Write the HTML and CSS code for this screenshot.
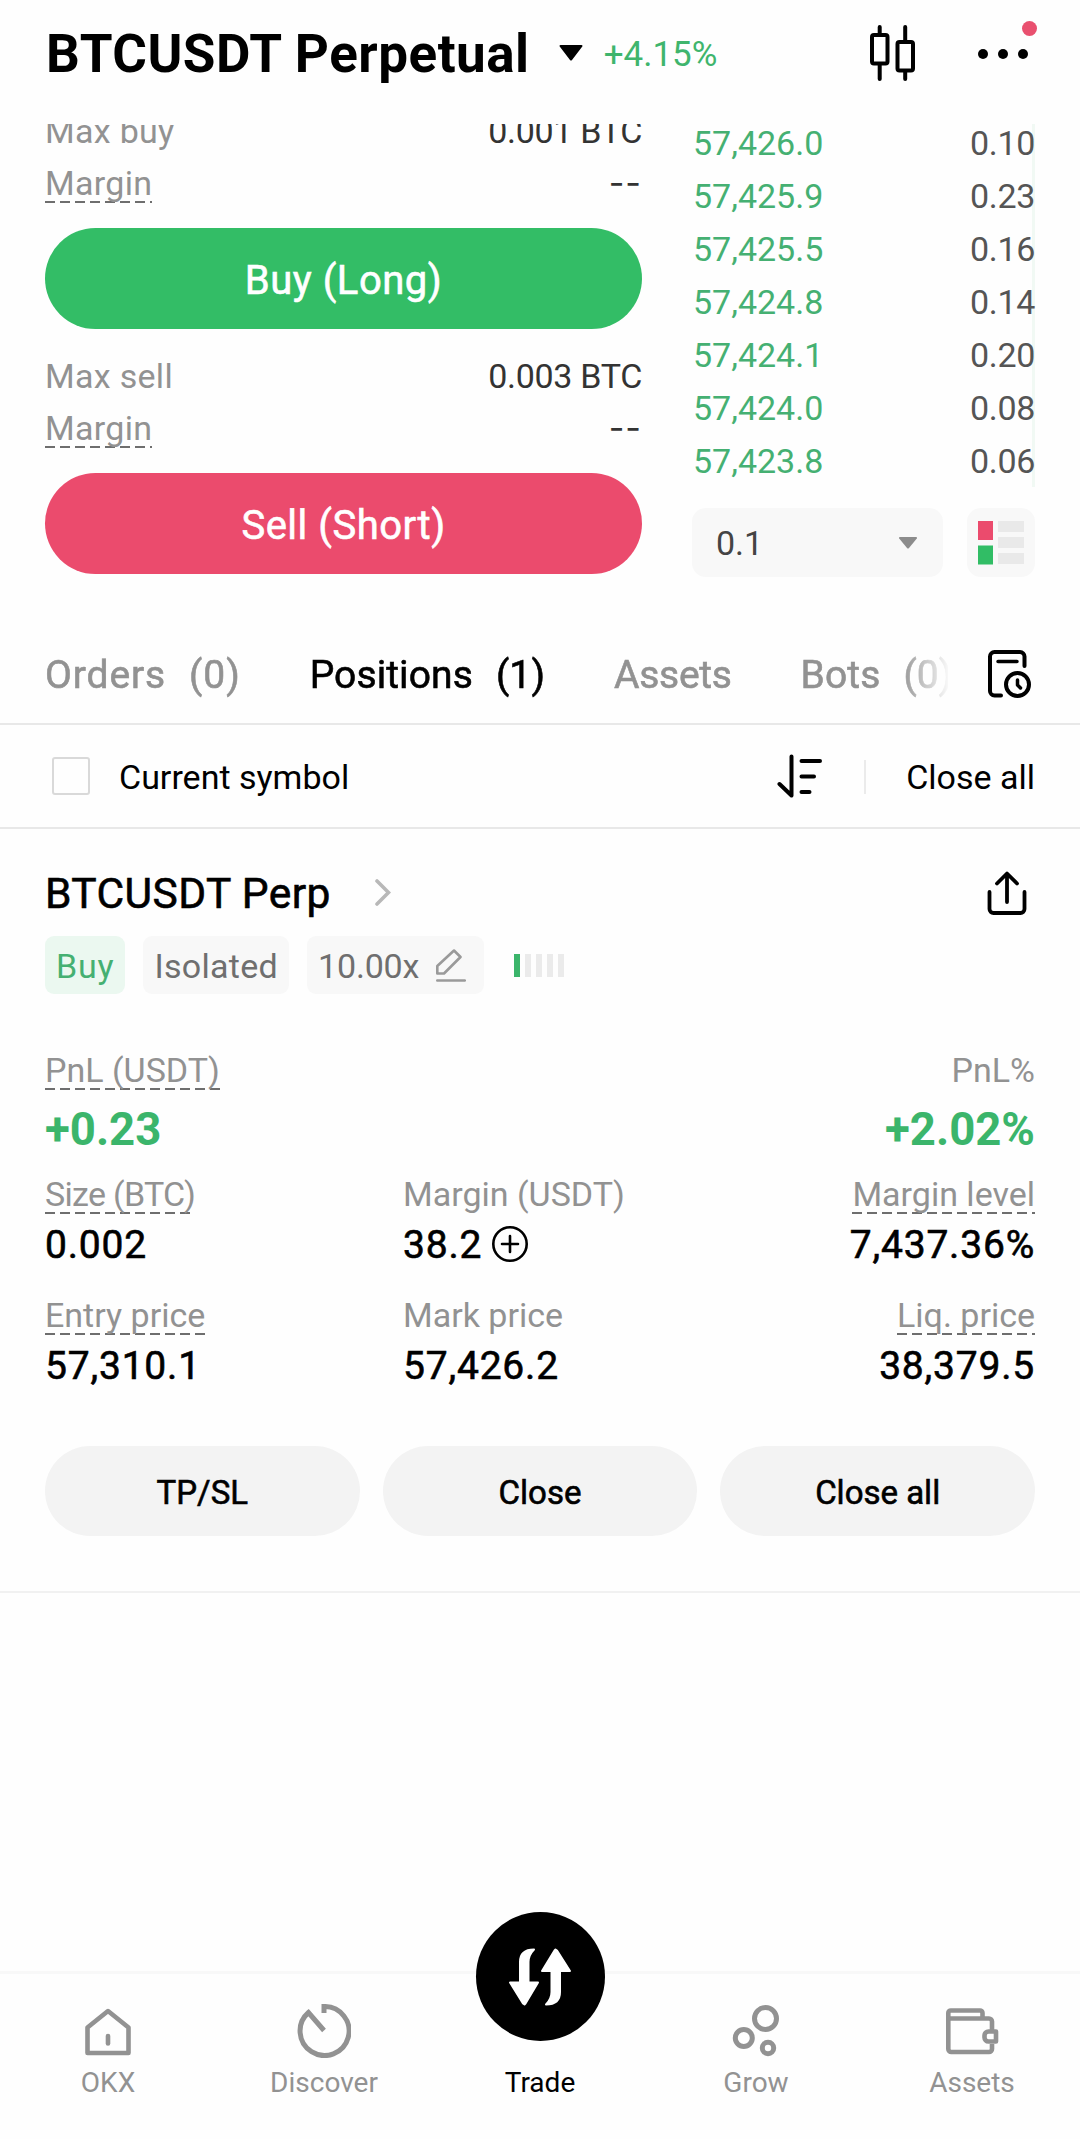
FILE: index.html
```html
<!DOCTYPE html>
<html lang="en">
<head>
  <meta charset="UTF-8">
  <meta name="viewport" content="width=device-width, initial-scale=1.0">
  <title>BTCUSDT Perpetual</title>
  <link rel="stylesheet" href="styles.css">
</head>
<body>

  <header class="header">
    <h1>BTCUSDT Perpetual</h1>
    <svg class="caret" width="24" height="16" viewBox="0 0 24 16"><path d="M1.5 0h21a1 1 0 0 1 .8 1.6L13 15a1.3 1.3 0 0 1-2 0L.7 1.6A1 1 0 0 1 1.5 0z"/></svg>
    <span class="change">+4.15%</span>
    <svg class="candles" width="46" height="58" viewBox="0 0 46 58" fill="none" stroke="#000" stroke-width="4" stroke-linecap="round">
      <rect x="2" y="11" width="15.5" height="28.5" rx="2"/>
      <rect x="27.5" y="18" width="15.5" height="28.5" rx="2"/>
      <path d="M9.7 3v8M9.7 40v15M35.2 3v15M35.2 47v8"/>
    </svg>
    <div class="more">
      <span></span><span></span><span></span>
      <i class="badge"></i>
    </div>
  </header>

  <main>
    <section class="trade">
      <div class="order-form">
        <div class="info"><span>Max buy</span><b>0.001 BTC</b></div>
        <div class="info"><span class="hint">Margin</span><b class="none">--</b></div>
        <button class="submit buy">Buy (Long)</button>
        <div class="info second"><span>Max sell</span><b>0.003 BTC</b></div>
        <div class="info"><span class="hint">Margin</span><b class="none">--</b></div>
        <button class="submit sell">Sell (Short)</button>
      </div>

      <div class="book">
        <div class="bids">
          <div class="bid"><span>57,426.0</span><b>0.10</b></div>
          <div class="bid"><span>57,425.9</span><b>0.23</b></div>
          <div class="bid"><span>57,425.5</span><b>0.16</b></div>
          <div class="bid"><span>57,424.8</span><b>0.14</b></div>
          <div class="bid"><span>57,424.1</span><b>0.20</b></div>
          <div class="bid"><span>57,424.0</span><b>0.08</b></div>
          <div class="bid"><span>57,423.8</span><b>0.06</b></div>
        </div>
        <div class="book-tools">
          <div class="select">
            <span>0.1</span>
            <svg width="18" height="12" viewBox="0 0 18 12"><path d="M1 0h16a1 1 0 0 1 .8 1.5L10 11a1.3 1.3 0 0 1-2 0L.2 1.5A1 1 0 0 1 1 0z" fill="#8c8c8c"/></svg>
          </div>
          <div class="layout-btn">
            <svg width="46" height="44" viewBox="0 0 46 44">
              <rect width="15" height="19" fill="#eb4b6d"/>
              <rect y="24.5" width="15" height="19" fill="#31bd65"/>
              <path d="M20 0h26v11H20zM20 16h26v11H20zM20 32h26v11H20z" fill="#e9e9e9"/>
            </svg>
          </div>
        </div>
      </div>
    </section>

    <nav class="tabs">
      <div class="tab-list">
        <a class="tab orders">Orders <span>(0)</span></a>
        <a class="tab active">Positions <span>(1)</span></a>
        <a class="tab assets">Assets</a>
        <a class="tab">Bots <span>(0)</span></a>
      </div>
      <svg width="44" height="50" viewBox="0 0 44 50" fill="none" stroke="#000" stroke-width="4" stroke-linecap="round" stroke-linejoin="round">
        <path d="M13 46.5H6.5A4.5 4.5 0 0 1 2 42V7.5A4.5 4.5 0 0 1 6.5 3H32a4.5 4.5 0 0 1 4.5 4.5V17"/>
        <path d="M10 12.5h19M29.5 31v5l3 3" stroke-width="3.5"/>
        <circle cx="29.5" cy="35.5" r="11.5"/>
      </svg>
    </nav>

    <div class="filter">
      <i class="checkbox"></i>
      <span class="filter-label">Current symbol</span>
      <svg width="46" height="46" viewBox="0 0 46 46" fill="none" stroke="#000" stroke-width="4" stroke-linecap="round" stroke-linejoin="round">
        <path d="M2.5 31 14.5 42.5V3.5M24.5 8H43M24.5 23.5h12.5M24.5 39h8"/>
      </svg>
      <i class="divider"></i>
      <span class="close-all">Close all</span>
    </div>

    <section class="position">
      <div class="position-head">
        <h2>BTCUSDT Perp</h2>
        <svg width="16" height="28" viewBox="0 0 16 28" fill="none" stroke="#b8b8b8" stroke-width="3.6" stroke-linecap="round"><path d="M2 2l11.5 11.5L2 25"/></svg>
        <svg class="share" width="40" height="44" viewBox="0 0 40 44" fill="none" stroke="#000" stroke-width="3.8" stroke-linecap="round" stroke-linejoin="round">
          <path d="M2.5 21v17a4 4 0 0 0 4 4h27a4 4 0 0 0 4-4V21M20 31V3M10 12.5l10-10 10 10"/>
        </svg>
      </div>

      <div class="tags">
        <span class="tag green">Buy</span>
        <span class="tag">Isolated</span>
        <span class="tag leverage">10.00x
          <svg width="30" height="34" viewBox="0 0 30 34" fill="none" stroke="#9a9a9a" stroke-width="2.6" stroke-linejoin="round"><path d="M1.3 24.5V17L18 1.5 24.5 8 8 24.500zM1.3 31.5h27.5" stroke-linecap="round"/></svg>
        </span>
        <div class="risk"><i class="on"></i><i></i><i></i><i></i><i></i></div>
      </div>

      <div class="stats pnl">
        <div><span class="label hint">PnL (USDT)</span><strong>+0.23</strong></div>
        <div class="right"><span class="label">PnL%</span><strong>+2.02%</strong></div>
      </div>

      <div class="stats">
        <div><span class="label hint tight">Size (BTC)</span><b>0.002</b></div>
        <div>
          <span class="label">Margin (USDT)</span>
          <b>38.2
            <svg width="38" height="38" viewBox="0 0 38 38" fill="none" stroke="#000" stroke-width="2.6"><circle cx="19" cy="18" r="16.7"/><path d="M11 18h16M19 10v16" stroke-linecap="round"/></svg>
          </b>
        </div>
        <div class="right"><span class="label hint">Margin level</span><b>7,437.36%</b></div>
      </div>

      <div class="stats prices">
        <div><span class="label hint">Entry price</span><b>57,310.1</b></div>
        <div><span class="label">Mark price</span><b>57,426.2</b></div>
        <div class="right"><span class="label hint">Liq. price</span><b>38,379.5</b></div>
      </div>

      <div class="actions">
        <button>TP/SL</button>
        <button>Close</button>
        <button>Close all</button>
      </div>
    </section>
  </main>

  <footer class="navbar">
    <a class="nav-item">
      <svg width="54" height="54" viewBox="0 0 54 54" fill="none" stroke="#929292" stroke-width="4.6" stroke-linejoin="round"><path d="M6.5 23.5 27 7l20.5 16.5V49h-41z"/><path d="M27 32v7.5" stroke-linecap="round"/></svg>
      <span>OKX</span>
    </a>
    <a class="nav-item">
      <svg width="54" height="54" viewBox="0 0 54 54" fill="none" stroke="#929292" stroke-width="5"><path d="M27 9V2.5A24.5 24.5 0 1 1 11.5 8.500L27 26.5"/></svg>
      <span>Discover</span>
    </a>
    <a class="nav-item active">
      <div class="trade-icon">
        <svg width="64" height="60" viewBox="0 0 64 60" fill="#fff" stroke="#fff" stroke-width="2" stroke-linejoin="round">
          <path d="M12 35.5V15C12 6.5 16 2.5 26 2.5 22.5 6 20.500 9 20.5 15v20.5H30L17.5 56.5l-1 1-1.5-1L2 35.5z"/>
          <path d="M52 24v21C52 53 48 57.5 38 57.5 41.5 54 43.5 51 43.5 45V24H34L46.5 3.5l1-1 1.5 1L62 24z"/>
        </svg>
      </div>
      <span>Trade</span>
    </a>
    <a class="nav-item">
      <svg width="54" height="54" viewBox="0 0 54 54" fill="none" stroke="#929292" stroke-width="5"><circle cx="36.5" cy="14.5" r="11"/><circle cx="14.8" cy="34" r="8.5"/><circle cx="39" cy="44" r="5.7"/></svg>
      <span>Grow</span>
    </a>
    <a class="nav-item">
      <svg width="54" height="54" viewBox="0 0 54 54" fill="none" stroke="#929292" stroke-width="4.6" stroke-linejoin="round"><path d="M3.3 14V9a2.5 2.5 0 0 1 2.5-2.5H35A2.5 2.5 0 0 1 37.5 9v5.5M3.3 14.5H44a3 3 0 0 1 3 3V27M47 40v5a3 3 0 0 1-3 3H6.3a3 3 0 0 1-3-3V14"/><path d="M51 27.5h-7.5a4 4 0 0 0-4 4v2a4 4 0 0 0 4 4H51z"/></svg>
      <span>Assets</span>
    </a>
  </footer>

</body>
</html>
```
FILE: styles.css
```css
* {
  box-sizing: border-box;
  margin: 0;
  padding: 0;
}

body {
  display: flex;
  flex-direction: column;
  min-height: 2139px;
  background-color: #fefefe;
  color: #000;
  font-family: Roboto, "Noto Sans", sans-serif;
  font-size: 34px;
}

svg {
  display: block;
  flex-shrink: 0;
}

button {
  border: none;
  font-family: inherit;
}

b {
  font-weight: 400;
}

/* slightly heavier than regular, lighter than medium */
h2,
button,
.tab,
.stats b {
  font-weight: 400;
  -webkit-text-stroke: 0.6px currentColor;
}

/* header */
.header {
  display: flex;
  align-items: center;
  height: 106px;
  padding: 0 45px 0 46px;
  margin-bottom: 18px;
}

h1 {
  padding-top: 1px;
  font-size: 53px;
  font-weight: 700;
  letter-spacing: 0.5px;
}

.caret {
  margin-left: 29px;
}

.change {
  margin-left: 21px;
  padding-top: 2px;
  color: #3fb56d;
  font-size: 35px;
}

.candles {
  margin-left: auto;
}

.more {
  position: relative;
  display: flex;
  gap: 10px;
  margin: 2px 7px 0 62px;
}

.more span {
  width: 10px;
  height: 10px;
  border-radius: 50%;
  background-color: #000;
}

.badge {
  position: absolute;
  top: -28px;
  right: -9px;
  width: 15px;
  height: 15px;
  border-radius: 50%;
  background-color: #e9506f;
}

/* order form + order book */
.trade {
  display: flex;
  gap: 50px;
  height: 453px;
  padding: 0 45px;
  overflow: hidden;
}

.order-form {
  width: 597px;
  margin-top: -19px;
}

.info {
  display: flex;
  justify-content: space-between;
  align-items: center;
  height: 52px;
  color: #929292;
  letter-spacing: 0.3px;
  line-height: 40px;
}

.info b {
  color: #333;
  letter-spacing: -0.3px;
}

.info .none {
  font-family: Inter, sans-serif;
  letter-spacing: 1px;
}

.info.second {
  margin-top: 21px;
}

/* dashed underline under explained labels */
.hint {
  background: repeating-linear-gradient(90deg, #6e6e6e 0 10px, transparent 10px 15px) left bottom / 100% 2px no-repeat;
}

.submit {
  display: block;
  width: 100%;
  height: 101px;
  margin-top: 19px;
  padding-top: 3px;
  border-radius: 51px;
  color: #fff;
  font-size: 40px;
  letter-spacing: 0.5px;
}

.buy {
  background-color: #33bd66;
}

.sell {
  background-color: #eb4b6d;
}

.book {
  flex: 1;
  margin-top: -8px;
}

.bids {
  padding-left: 1px;
  background: linear-gradient(#f1f9f4, #f1f9f4) right top / 3px 100% no-repeat;
}

.bid {
  display: flex;
  justify-content: space-between;
  align-items: center;
  height: 53px;
  color: #45b072;
}

.bid b {
  color: #555;
  letter-spacing: -0.3px;
}

.book-tools {
  display: flex;
  gap: 24px;
  margin-top: 21px;
}

.select {
  display: flex;
  flex: 1;
  justify-content: space-between;
  align-items: center;
  height: 69px;
  padding: 1px 26px 0 24px;
  border-radius: 14px;
  background-color: #f8f8f8;
  color: #444;
}

.layout-btn {
  display: flex;
  justify-content: center;
  align-items: center;
  width: 68px;
  border-radius: 14px;
  background-color: #f8f8f8;
}

/* tabs */
.tabs {
  display: flex;
  justify-content: space-between;
  align-items: center;
  height: 100px;
  margin-top: 48px;
  padding: 0 48px 0 45px;
  border-bottom: 2px solid #e8e8e8;
}

.tab-list {
  display: flex;
  width: 903px;
  padding-top: 1px;
  overflow: hidden;
  white-space: nowrap;
  mask-image: linear-gradient(90deg, #000 855px, transparent 906px);
}

.tab {
  display: flex;
  flex-shrink: 0;
  gap: 23px;
  margin-right: 69px;
  color: #929292;
  font-size: 39px;
  letter-spacing: 0.1px;
}

.tab.orders {
  letter-spacing: 0.9px;
}

.tab.assets {
  letter-spacing: -0.3px;
}

.tab.active {
  color: #000;
}

.filter {
  display: flex;
  align-items: center;
  height: 104px;
  padding: 0 45px 0 52px;
  border-bottom: 2px solid #e8e8e8;
}

.checkbox {
  width: 38px;
  height: 38px;
  margin-top: -1px;
  border: 2px solid #d9d9d9;
  border-radius: 3px;
}

.filter-label {
  margin: 2px auto 0 29px;
}

.divider {
  width: 2px;
  height: 34px;
  margin: 2px 40px 0 41px;
  background-color: #ebebeb;
}

.close-all {
  margin-top: 2px;
}

/* open position */
.position {
  padding: 34px 45px 55px;
  border-bottom: 2px solid #f1f1f1;
}

.position-head {
  display: flex;
  align-items: center;
  height: 60px;
}

h2 {
  margin-right: 44px;
  font-size: 42.5px;
  letter-spacing: 0.4px;
}

.share {
  margin: 0 8px 0 auto;
}

.tags {
  display: flex;
  align-items: center;
  gap: 18px;
  margin-top: 13px;
}

.tag {
  display: flex;
  align-items: center;
  height: 58px;
  padding: 2px 11px 0;
  border-radius: 9px;
  background-color: #f8f8f8;
  color: #6f6f6f;
  letter-spacing: 0.3px;
}

.tag.green {
  background-color: #ebf8f0;
  color: #45b072;
  letter-spacing: 0.8px;
}

.tag.leverage {
  gap: 17px;
  padding-right: 18px;
  letter-spacing: -0.2px;
}

.risk {
  display: flex;
  gap: 5px;
  margin-left: 12px;
}

.risk i {
  width: 6px;
  height: 23px;
  background-color: #ebebeb;
}

.risk .on {
  background-color: #3bb56b;
}

.stats {
  display: grid;
  grid-template-columns: 358px 1fr auto;
  margin-top: 16px;
}

.stats.pnl {
  grid-template-columns: 1fr auto;
  margin-top: 56px;
}

.stats.prices {
  margin-top: 28px;
}

.stats > div {
  display: flex;
  flex-direction: column;
  align-items: flex-start;
}

.stats .right {
  align-items: flex-end;
}

.label {
  color: #929292;
  line-height: 40px;
}

.label.tight {
  letter-spacing: -0.7px;
}

.stats strong {
  margin-top: 13px;
  margin-bottom: 1px;
  color: #3bb56b;
  font-size: 45.5px;
  line-height: 54px;
}

.stats b {
  display: flex;
  align-items: center;
  gap: 9px;
  margin-top: 9px;
  font-size: 39px;
  letter-spacing: 0.8px;
  line-height: 44px;
}

.actions {
  display: grid;
  grid-template-columns: repeat(3, 1fr);
  gap: 23px;
  margin-top: 58px;
}

.actions button {
  height: 90px;
  padding-top: 2px;
  border-radius: 45px;
  background-color: #f3f3f3;
  font-size: 33px;
}

/* bottom navigation */
.navbar {
  display: grid;
  grid-template-columns: repeat(5, 1fr);
  height: 168px;
  margin-top: auto;
  padding-top: 30px;
  border-top: 3px solid #f8f8f8;
}

.nav-item {
  display: flex;
  flex-direction: column;
  align-items: center;
  gap: 8px;
  color: #929292;
  font-size: 28px;
  line-height: 34px;
}

.nav-item.active {
  gap: 25px;
  color: #000;
}

.trade-icon {
  display: flex;
  justify-content: center;
  align-items: center;
  width: 129px;
  height: 129px;
  margin-top: -92px;
  border-radius: 50%;
  background-color: #000;
}
```
